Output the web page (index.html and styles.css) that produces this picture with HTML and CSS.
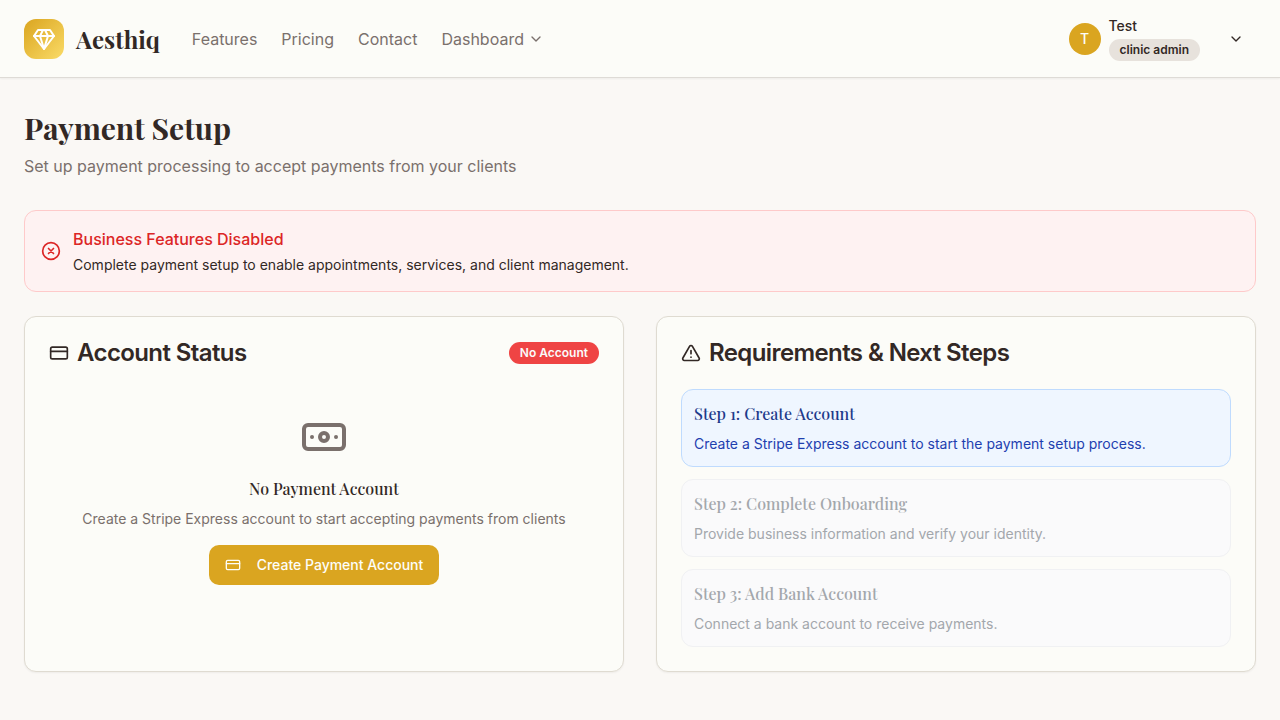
FILE: index.html
```html
<!DOCTYPE html>
<html lang="en">
<head>
<meta charset="utf-8">
<title>Payment Setup</title>
<link rel="stylesheet" href="styles.css">
</head>
<body>
<header class="topbar">
  <a class="brand">
    <span class="brand-mark"><svg class="icon icon-24" viewBox="0 0 24 24"><path d="M6 3h12l4 6-10 13L2 9Z"/><path d="M11 3 8 9l4 13 4-13-3-6"/><path d="M2 9h20"/></svg></span>
    <span class="brand-name">Aesthiq</span>
  </a>
  <nav class="nav">
    <a>Features</a><a>Pricing</a><a>Contact</a>
    <a class="nav-menu">Dashboard<svg class="icon icon-16" viewBox="0 0 24 24"><path d="m6 9 6 6 6-6"/></svg></a>
  </nav>
  <div class="user">
    <span class="avatar">T</span>
    <div class="user-info"><span class="user-name">Test</span><span class="badge badge-muted">clinic admin</span></div>
    <svg class="icon icon-16 user-caret" viewBox="0 0 24 24"><path d="m6 9 6 6 6-6"/></svg>
  </div>
</header>
<main class="page">
  <h1 class="page-title">Payment Setup</h1>
  <p class="page-subtitle">Set up payment processing to accept payments from your clients</p>
  <section class="alert">
    <svg class="icon icon-20" viewBox="0 0 24 24"><circle cx="12" cy="12" r="10"/><path d="m15 9-6 6M9 9l6 6"/></svg>
    <div><p class="alert-title">Business Features Disabled</p><p class="alert-text">Complete payment setup to enable appointments, services, and client management.</p></div>
  </section>
  <div class="cards">
    <section class="card">
      <div class="card-head">
        <h2 class="card-title"><svg class="icon icon-20" viewBox="0 0 24 24"><rect width="20" height="14" x="2" y="5" rx="2"/><path d="M2 10h20"/></svg>Account Status</h2>
        <span class="badge badge-danger">No Account</span>
      </div>
      <div class="empty">
        <svg class="icon icon-48" viewBox="0 0 24 24"><rect width="20" height="12" x="2" y="6" rx="2"/><circle cx="12" cy="12" r="2"/><path d="M6 12h.01M18 12h.01"/></svg>
        <h3 class="serif-heading empty-title">No Payment Account</h3>
        <p class="empty-text">Create a Stripe Express account to start accepting payments from clients</p>
        <button class="button"><svg class="icon icon-16" viewBox="0 0 24 24"><rect width="20" height="14" x="2" y="5" rx="2"/><path d="M2 10h20"/></svg>Create Payment Account</button>
      </div>
    </section>
    <section class="card">
      <div class="card-head">
        <h2 class="card-title"><svg class="icon icon-20" viewBox="0 0 24 24"><path d="m21.73 18-8-14a2 2 0 0 0-3.48 0l-8 14A2 2 0 0 0 4 21h16a2 2 0 0 0 1.73-3"/><path d="M12 9v4M12 17h.01"/></svg>Requirements &amp; Next Steps</h2>
      </div>
      <div class="steps">
        <div class="step step-active"><h3 class="serif-heading">Step 1: Create Account</h3><p>Create a Stripe Express account to start the payment setup process.</p></div>
        <div class="step step-pending"><h3 class="serif-heading">Step 2: Complete Onboarding</h3><p>Provide business information and verify your identity.</p></div>
        <div class="step step-pending"><h3 class="serif-heading">Step 3: Add Bank Account</h3><p>Connect a bank account to receive payments.</p></div>
      </div>
    </section>
  </div>
</main>
</body>
</html>
```
FILE: styles.css
```css
* { box-sizing: border-box; margin: 0; padding: 0; }
body { background: #faf8f5; color: #322825; font: 400 16px/24px Inter, "Liberation Sans", sans-serif; min-height: 720px; }
.icon { fill: none; stroke: currentColor; stroke-width: 2; stroke-linecap: round; stroke-linejoin: round; flex: none; display: block; }
.icon-16 { width: 16px; height: 16px; }
.icon-20 { width: 20px; height: 20px; }
.icon-24 { width: 24px; height: 24px; }
.icon-48 { width: 48px; height: 48px; }
.topbar { height: 78px; display: flex; align-items: center; padding: 0 24px; background: #fcfcf8; border-bottom: 1px solid #dedbd6; box-shadow: 0 1px 2px rgba(0,0,0,.05); }
.brand { display: flex; align-items: center; gap: 12px; }
.brand-mark { width: 40px; height: 40px; border-radius: 12px; display: grid; place-items: center; color: #fff; background: linear-gradient(135deg, #daa520, #fadb67); }
.brand-name { font: 700 24px/32px "Playfair Display", "Liberation Serif", serif; white-space: nowrap; }
.nav { display: flex; gap: 24px; margin-left: 32px; color: #7a706c; }
.nav-menu { display: flex; align-items: center; gap: 4px; }
.user { margin-left: auto; display: flex; align-items: center; }
.avatar { width: 32px; height: 32px; border-radius: 50%; background: #daa520; color: #fdfdf8; font-size: 14px; font-weight: 500; display: grid; place-items: center; margin-right: 8px; }
.user-info { display: flex; flex-direction: column; align-items: flex-start; gap: 3px; }
.user-name { font-size: 14px; line-height: 20px; font-weight: 500; }
.user-caret { margin: 0 12px 0 28px; }
.badge { display: block; border-radius: 11px; font-size: 12px; line-height: 16px; font-weight: 600; padding: 3px 11px; white-space: nowrap; }
.badge-muted { background: #e7e2dc; }
.badge-danger { background: #ef4444; color: #fafafa; }
.page { padding: 32px 24px; }
.page-title { font: 700 30px/36px "Playfair Display", "Liberation Serif", serif; }
.page-subtitle { color: #7a706c; margin-top: 8px; }
.alert { margin-top: 32px; height: 82px; display: flex; align-items: center; gap: 12px; padding: 0 16px; border: 1px solid #fecaca; border-radius: 12px; background: #fef2f2; }
.alert .icon, .alert-title { color: #dc2626; }
.alert-title { font-weight: 500; }
.alert-text { font-size: 14px; line-height: 20px; margin-top: 4px; }
.cards { margin-top: 24px; display: grid; grid-template-columns: 1fr 1fr; gap: 32px; }
.card { height: 356px; padding: 24px; border: 1px solid #dfdbd1; border-radius: 12px; background: #fcfcf8; box-shadow: 0 1px 2px rgba(0,0,0,.05); }
.card-head { height: 24px; display: flex; align-items: center; justify-content: space-between; }
.card-title { display: flex; align-items: center; gap: 8px; font-size: 24px; line-height: 24px; font-weight: 600; letter-spacing: -.6px; }
.empty { display: flex; flex-direction: column; align-items: center; padding-top: 48px; }
.empty .icon-48 { color: #7a706c; }
.serif-heading { font: 500 16px/24px "Playfair Display", "Liberation Serif", serif; white-space: nowrap; }
.empty-title { margin-top: 16px; }
.empty-text { color: #7a706c; font-size: 14px; line-height: 20px; margin: 8px 0 16px; }
.button { height: 40px; padding: 0 16px; display: flex; align-items: center; gap: 16px; border: 0; border-radius: 10px; background: #daa520; color: #fdfdf8; font: 500 14px/20px Inter, "Liberation Sans", sans-serif; }
.steps { margin-top: 24px; display: grid; gap: 12px; }
.step { height: 78px; padding: 12px; border: 1px solid; border-radius: 12px; }
.step p { font-size: 14px; line-height: 20px; margin-top: 8px; }
.step-active { background: #eff6ff; border-color: #bfdbfe; color: #1e40af; }
.step-active h3 { color: #1e3a8a; }
.step-pending { background: #fafafb; border-color: #f0f1f3; color: #a3a7ac; }
```
